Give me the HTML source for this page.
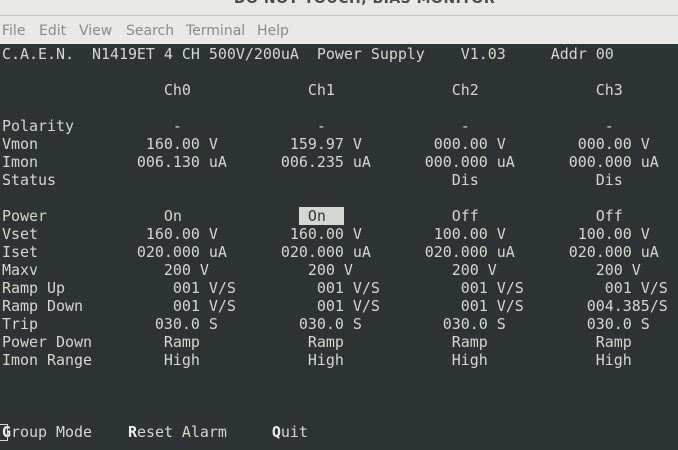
<!DOCTYPE html>
<html><head><meta charset="utf-8"><style>
html,body{margin:0;padding:0;width:678px;height:450px;overflow:hidden;background:#e8e8e7;}
.title{position:absolute;left:0;top:0;width:678px;height:15px;background:#e8e8e7;border-bottom:1px solid #c4c4c2;overflow:hidden;}
.title span{position:absolute;left:234px;top:-9px;font:bold 14px "DejaVu Sans",sans-serif;color:#4c4c4c;letter-spacing:0.5px;}
.menu{position:absolute;left:0;top:16px;width:678px;height:27px;background:#e8e8e7;font:14px "DejaVu Sans","Liberation Sans",sans-serif;color:#8a8a88;}
.menu span{position:absolute;top:7px;}
.term{position:absolute;left:0;top:44px;width:678px;height:406px;background:#2e3436;}
pre{position:absolute;left:2px;top:1px;margin:0;font:15px/18px "DejaVu Sans Mono",monospace;letter-spacing:-0.035px;color:#d3d7cf;}
.hl{background:#d3d7cf;color:#2e3436;}
b{color:#eeeeec;}
.cur{position:absolute;left:0;top:380px;width:8px;height:17px;border:1px solid #d3d7cf;border-left:none;box-sizing:border-box;}
</style></head><body>
<div class="title"><span>DO NOT TOUCH, BIAS MONITOR</span></div>
<div class="menu"><span style="left:2px">File</span><span style="left:39px">Edit</span><span style="left:79px">View</span><span style="left:126px">Search</span><span style="left:186px">Terminal</span><span style="left:257px">Help</span></div>
<div class="term">
<pre>C.A.E.N.  N1419ET 4 CH 500V/200uA  Power Supply    V1.03     Addr 00

                  Ch0             Ch1             Ch2             Ch3

Polarity           -               -               -               -
Vmon            160.00 V        159.97 V        000.00 V        000.00 V
Imon           006.130 uA      006.235 uA      000.000 uA      000.000 uA
Status                                            Dis             Dis

Power             On             <span class="hl"> On  </span>            Off             Off
Vset            160.00 V        160.00 V        100.00 V        100.00 V
Iset           020.000 uA      020.000 uA      020.000 uA      020.000 uA
Maxv              200 V           200 V           200 V           200 V
Ramp Up            001 V/S         001 V/S         001 V/S         001 V/S
Ramp Down          001 V/S         001 V/S         001 V/S       004.385/S
Trip             030.0 S         030.0 S         030.0 S         030.0 S
Power Down        Ramp            Ramp            Ramp            Ramp
Imon Range        High            High            High            High



<b>G</b>roup Mode    <b>R</b>eset Alarm     <b>Q</b>uit</pre>
<div class="cur"></div>
</div>
</body></html>
